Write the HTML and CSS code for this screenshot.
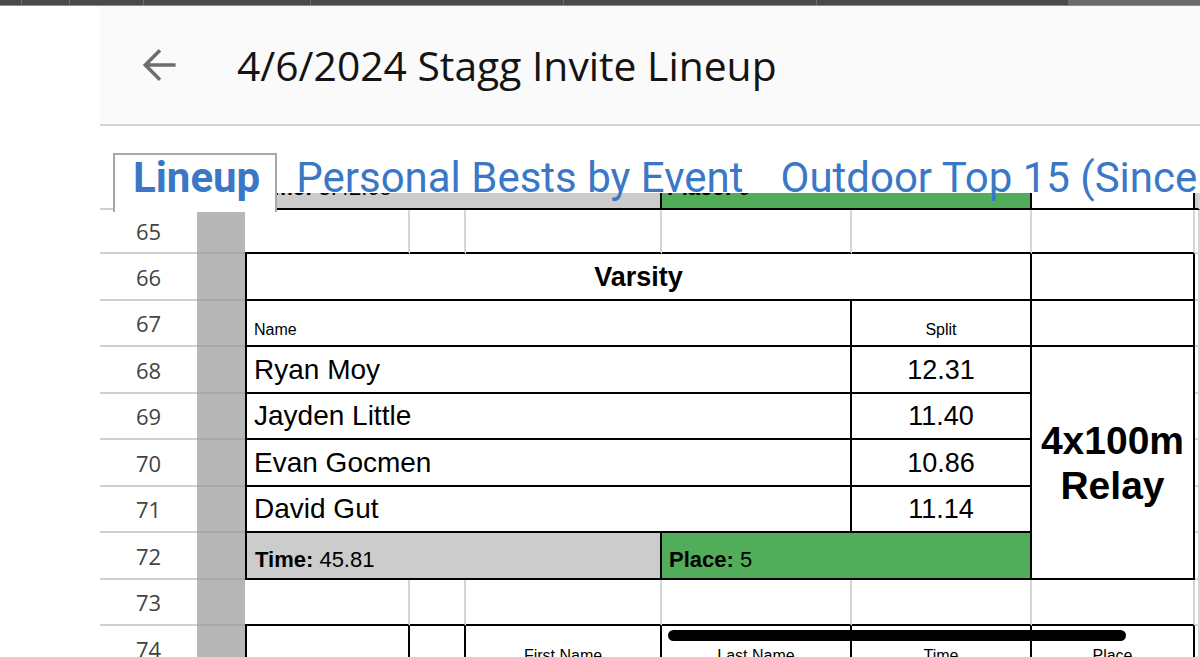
FILE: index.html
```html
<!DOCTYPE html>
<html>
<head>
<meta charset="utf-8">
<title>4/6/2024 Stagg Invite Lineup</title>
<link rel="stylesheet" href="styles.css">
</head>
<body>
<div class="topbar">
  <span class="seg s1"></span><span class="seg s2"></span><span class="seg s3"></span><span class="seg s4"></span><span class="seg s5"></span><span class="seg s6"></span><span class="seg s7"></span><span class="seg s8"></span>
</div>
<div class="page">
  <header class="appbar">
    <svg class="back" viewBox="0 0 24 24" aria-hidden="true"><path d="M19.2 12H5.2M12 5.2L5.2 12l6.8 6.8"/></svg>
    <h1 class="title">4/6/2024 Stagg Invite Lineup</h1>
  </header>
  <nav class="tabs">
    <div class="tab active">Lineup</div>
    <div class="tab">Personal Bests by Event</div>
    <div class="tab">Outdoor Top 15 (Since 2019)</div>
  </nav>
  <div class="sheet">
    <!-- row 64 (partially hidden) -->
    <div class="c rh"></div>
    <div class="c gc"></div>
    <div class="c span3 gray bl br bb"><span class="frag"><b>Time:</b> 3:42.65</span></div>
    <div class="c span2 green br bb"><span class="frag fragp"><b>Place:</b> 6</span></div>
    <div class="c br bb"></div>
    <div class="c gray bb"></div>

    <!-- row 65 -->
    <div class="c rh">65</div>
    <div class="c gc"></div>
    <div class="c bb"></div><div class="c bb"></div><div class="c bb"></div><div class="c bb"></div><div class="c bb"></div><div class="c bb"></div>
    <div class="c"></div>

    <!-- row 66 -->
    <div class="c rh">66</div>
    <div class="c gc"></div>
    <div class="c span5 bl br bb varsity">Varsity</div>
    <div class="c br bb"></div>
    <div class="c"></div>

    <!-- row 67 -->
    <div class="c rh">67</div>
    <div class="c gc"></div>
    <div class="c span4 bl br bb label">Name</div>
    <div class="c br bb label center">Split</div>
    <div class="c br bb"></div>
    <div class="c"></div>

    <!-- row 68 -->
    <div class="c rh">68</div>
    <div class="c gc"></div>
    <div class="c span4 bl br bb big">Ryan Moy</div>
    <div class="c br bb big center">12.31</div>
    <div class="c rows5 br bb relay">4x100m<br>Relay</div>
    <div class="c"></div>

    <!-- row 69 -->
    <div class="c rh">69</div>
    <div class="c gc"></div>
    <div class="c span4 bl br bb big">Jayden Little</div>
    <div class="c br bb big center">11.40</div>
    <div class="c"></div>

    <!-- row 70 -->
    <div class="c rh">70</div>
    <div class="c gc"></div>
    <div class="c span4 bl br bb big">Evan Gocmen</div>
    <div class="c br bb big center">10.86</div>
    <div class="c"></div>

    <!-- row 71 -->
    <div class="c rh">71</div>
    <div class="c gc"></div>
    <div class="c span4 bl br bb big">David Gut</div>
    <div class="c br bb big center">11.14</div>
    <div class="c"></div>

    <!-- row 72 -->
    <div class="c rh">72</div>
    <div class="c gc"></div>
    <div class="c span3 gray bl br bb sum"><span><b>Time:</b> 45.81</span></div>
    <div class="c span2 green br bb sum"><span><b>Place:</b> 5</span></div>
    <div class="c"></div>

    <!-- row 73 -->
    <div class="c rh">73</div>
    <div class="c gc"></div>
    <div class="c bb"></div><div class="c bb"></div><div class="c bb"></div><div class="c bb"></div><div class="c bb"></div><div class="c bb"></div>
    <div class="c"></div>

    <!-- row 74 -->
    <div class="c rh">74</div>
    <div class="c gc"></div>
    <div class="c bl br bb"></div>
    <div class="c br bb"></div>
    <div class="c br bb label center">First Name</div>
    <div class="c br bb label center">Last Name</div>
    <div class="c br bb label center">Time</div>
    <div class="c br bb label center">Place</div>
    <div class="c"></div>

    <div class="scrollbar"></div>
  </div>
</div>
</body>
</html>
```

FILE: styles.css
```css
html, body {
  margin: 0;
  padding: 0;
  width: 1200px;
  height: 657px;
  overflow: hidden;
  background: #ffffff;
}

.topbar {
  display: flex;
  height: 5px;
  background: #4a4a4a;
  border-bottom: 1px solid #8c8c8c;
}
.seg {
  flex: none;
  height: 5px;
  border-right: 1px solid #6c6c6c;
}
.s1 { width: 21px; }
.s2 { width: 47px; }
.s3 { width: 73px; }
.s4 { width: 166px; }
.s5 { width: 252px; }
.s6 { width: 252px; }
.s7 { width: 251px; }
.s8 { flex: 1; background: #6a6a6a; border-right: 0; }

.page {
  margin-left: 100px;
}

.appbar {
  height: 118px;
  background: #fafafa;
  border-bottom: 2px solid #d3d3d3;
  display: flex;
  align-items: center;
  padding-left: 34px;
}
.back {
  flex: none;
  width: 52px;
  height: 52px;
  fill: none;
  stroke: #6d6d6d;
  stroke-width: 1.6;
}
.title {
  margin: 0 0 0 51px;
  font-family: "Open Sans", sans-serif;
  font-weight: 400;
  font-size: 40.8px;
  color: #141414;
  white-space: nowrap;
}

.tabs {
  display: flex;
  align-items: flex-end;
  height: 67px;
  padding-left: 13px;
  position: relative;
  z-index: 2;
  white-space: nowrap;
}
.tab {
  flex: none;
  box-sizing: border-box;
  height: 59px;
  margin-bottom: -19px;
  padding: 0 16px 0 17px;
  border: 2px solid transparent;
  border-bottom: 0;
  font-family: Roboto, sans-serif;
  font-size: 42px;
  line-height: 46px;
  color: #3a78c7;
}
.tab.active {
  font-weight: 700;
  background: #ffffff;
  border-color: #a8a8a8;
  padding: 0 15px 0 18px;
}

.sheet {
  position: relative;
  display: grid;
  grid-template-columns: 97px 48px 165px 56px 196px 190px 180px 163px 5px;
  grid-template-rows: 17px 44px 47px 46px 47px 46px 47px 46px 47px 46px 47px;
}

.c {
  box-sizing: border-box;
  min-width: 0;
  overflow: hidden;
  display: flex;
  align-items: flex-end;
  border-right: 2px solid #d6d6d6;
  border-bottom: 2px solid #d6d6d6;
  font-family: "Liberation Sans", Arial, sans-serif;
  color: #000000;
  white-space: nowrap;
}
.span2 { grid-column: span 2; }
.span3 { grid-column: span 3; }
.span4 { grid-column: span 4; }
.span5 { grid-column: span 5; }
.rows5 { grid-row: span 5; }

.bl { border-left: 2px solid #000000; }
.br { border-right-color: #000000; }
.bb { border-bottom-color: #000000; }

.gray { background: #cccccc; }
.green { background: #52ad5b; }

.rh {
  border-right: 0;
  border-bottom-color: #d0d0d0;
  align-items: center;
  justify-content: center;
  font-family: "Open Sans", sans-serif;
  font-size: 22px;
  color: #434343;
}
.gc {
  background: #b7b7b7;
  border-right: 0;
  border-bottom-color: #a9a9a9;
}

.center { justify-content: center; }

.frag {
  font-size: 22px;
  line-height: 22px;
  padding: 0 0 9px 7px;
}
.fragp { padding-left: 5px; }

.varsity {
  align-items: center;
  justify-content: center;
  font-weight: 700;
  font-size: 27px;
  padding-top: 2px;
}
.label {
  font-size: 16px;
  line-height: 16px;
  padding: 0 0 7px 7px;
}
.label.center { padding-left: 0; }

.big {
  font-size: 28px;
  line-height: 28px;
  padding: 0 0 8px 7px;
}
.big.center { padding-left: 0; font-size: 27px; }

.sum {
  font-size: 22px;
  line-height: 22px;
  padding: 0 0 7px 8px;
}
.green.sum { padding-left: 7px; }

.relay {
  align-items: center;
  justify-content: center;
  text-align: center;
  font-weight: 700;
  font-size: 39px;
  line-height: 45px;
}

.scrollbar {
  position: absolute;
  left: 568px;
  top: 437px;
  width: 458px;
  height: 11px;
  border-radius: 6px;
  background: #000000;
  z-index: 3;
}
```
